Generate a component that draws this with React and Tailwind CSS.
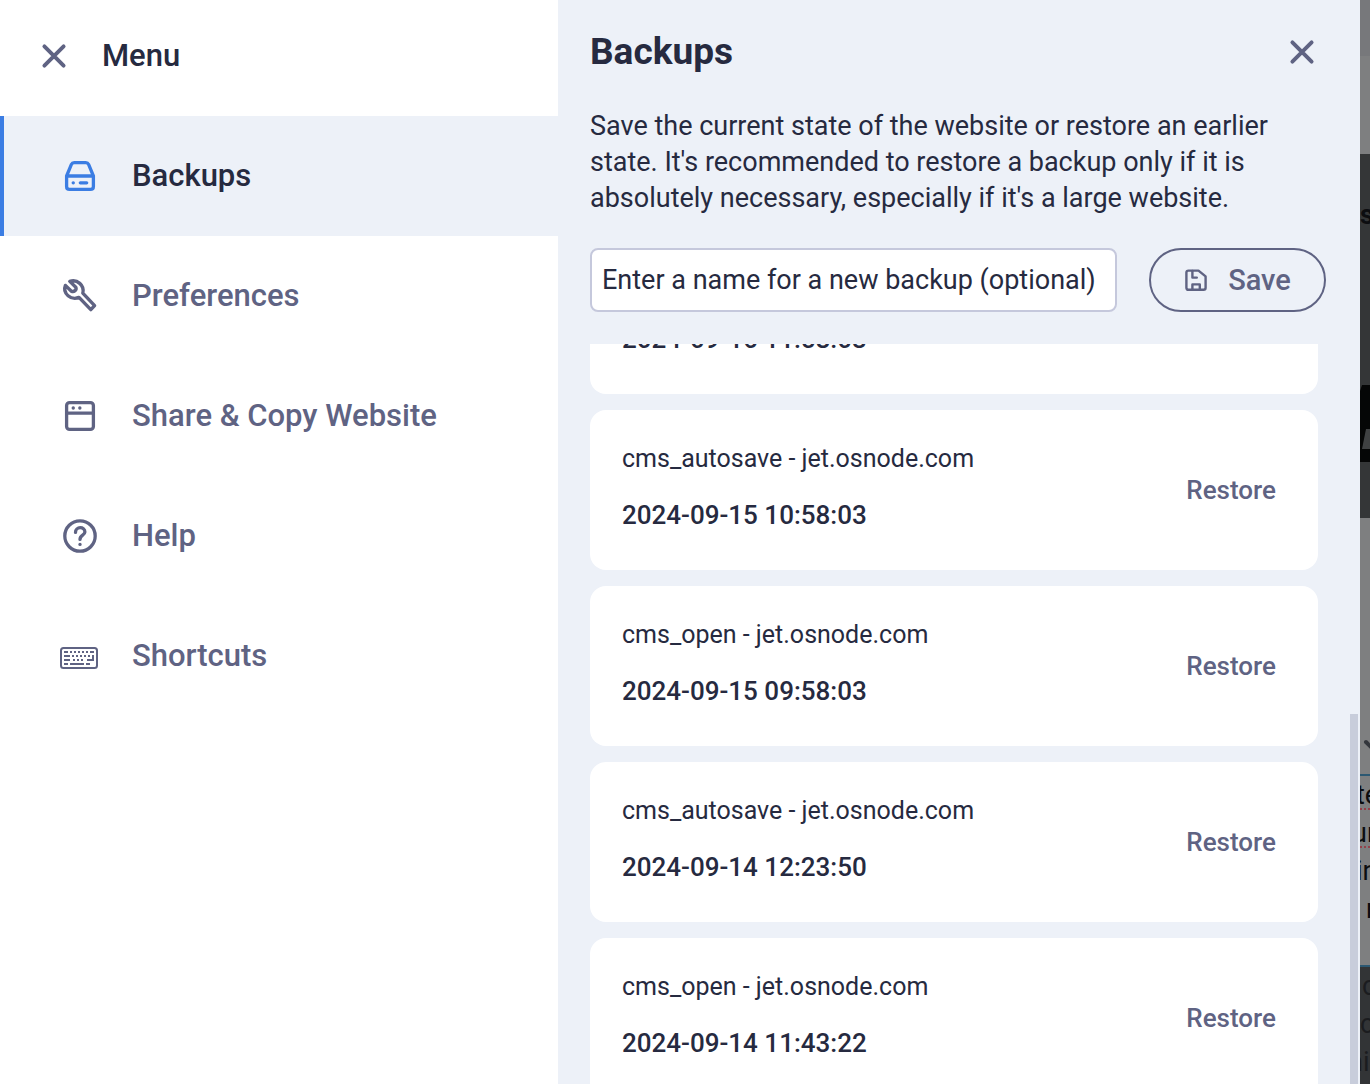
import React, { useLayoutEffect, useRef } from "react";

const backups = [
  { name: "cms_autosave - jet.osnode.com", date: "2024-09-16 11:58:03" },
  { name: "cms_autosave - jet.osnode.com", date: "2024-09-15 10:58:03" },
  { name: "cms_open - jet.osnode.com", date: "2024-09-15 09:58:03" },
  { name: "cms_autosave - jet.osnode.com", date: "2024-09-14 12:23:50" },
  { name: "cms_open - jet.osnode.com", date: "2024-09-14 11:43:22" },
];

const stroke = {
  fill: "none",
  stroke: "currentColor",
  strokeLinecap: "round",
  strokeLinejoin: "round",
};

function CloseIcon() {
  return (
    <svg width="40" height="40" viewBox="0 0 40 40" {...stroke} strokeWidth="3.9" aria-hidden="true">
      <path d="M10.4 10.4 29.6 29.6M29.6 10.4 10.4 29.6" />
    </svg>
  );
}

function DriveIcon() {
  return (
    <svg width="40" height="40" viewBox="0 0 40 40" {...stroke} strokeWidth="3.3" aria-hidden="true">
      <path d="M6.6 20 11.4 8.4Q12.2 6.6 14.2 6.6H25.8Q27.8 6.6 28.6 8.4L33.4 20V30.4Q33.4 33.4 30.4 33.4H9.6Q6.6 33.4 6.6 30.4ZM7 20H33" />
      <path d="M13.2 26.8H13.3M20.3 26.8H26.7" />
    </svg>
  );
}

function WrenchIcon() {
  return (
    <svg width="40" height="40" viewBox="0 0 40 40" {...stroke} strokeWidth="3.4" aria-hidden="true">
      <path d="M5.4 9.4 11.4 15.2C14 16.4 17 13.8 15.8 11.2L9.8 5.4C17 2.7 24.8 9.4 22.8 17.2L34.6 29.6 30.8 33.6 19 21.4C11.2 24.8 2.2 17.4 5.4 9.4Z" />
    </svg>
  );
}

function BrowserIcon() {
  return (
    <svg width="40" height="40" viewBox="0 0 40 40" {...stroke} strokeWidth="3.3" aria-hidden="true">
      <rect x="6.6" y="6.6" width="26.8" height="26.8" rx="3" />
      <path d="M7 17.2H33" />
      <path d="M13.2 12H13.3M19.8 12H19.9" />
    </svg>
  );
}

function HelpIcon() {
  return (
    <svg width="40" height="40" viewBox="0 0 40 40" {...stroke} strokeWidth="3.3" aria-hidden="true">
      <circle cx="20" cy="20" r="15.2" />
      <path d="M15.5 16.4C15.5 10.2 24.9 10.2 24.9 16C24.9 19.5 20 19 20 23.4" />
      <path d="M20 28.3V28.4" />
    </svg>
  );
}

function KeyboardIcon() {
  return (
    <svg width="40" height="40" viewBox="0 0 40 40" fill="none" stroke="currentColor" strokeWidth="2" aria-hidden="true">
      <rect x="1" y="12" width="36" height="20" rx="2.5" />
      <path d="M4 16H8M10 16H12M14 16H16M18 16H20M22 16H24M26 16H28M30 16H34" />
      <path d="M4 20H10M12 20H14M16 20H18M20 20H22M24 20H26M28 20H30M4 24H10M13 24H15M17 24H19M21 24H23M27 24H33V19M4 28H8M10 28H24M26 28H30" />
    </svg>
  );
}

function SaveIcon() {
  return (
    <svg width="24" height="24" viewBox="0 0 24 24" {...stroke} strokeWidth="2.4" aria-hidden="true">
      <path d="M4.4 2.6H14.5L21.6 8.4V19.8Q21.6 21.8 19.6 21.8H4.4Q2.4 21.8 2.4 19.8V4.6Q2.4 2.6 4.4 2.6Z" />
      <path d="M8.4 3V9.6H12.8M8.4 21V16.4H15.8V21" />
    </svg>
  );
}

const navItems = [
  { label: "Backups", Icon: DriveIcon, active: true },
  { label: "Preferences", Icon: WrenchIcon },
  { label: "Share & Copy Website", Icon: BrowserIcon },
  { label: "Help", Icon: HelpIcon },
  { label: "Shortcuts", Icon: KeyboardIcon },
];

function Sidebar() {
  return (
    <nav className="bg-white" aria-label="Menu">
      <div className="flex h-[116px] items-start gap-7 px-[34px] pt-9">
        <button type="button" aria-label="Close menu" className="text-[#5f6383]">
          <CloseIcon />
        </button>
        <h2 className="text-[31px] leading-10 font-medium">Menu</h2>
      </div>
      <ul>
        {navItems.map(({ label, Icon, active }) => (
          <li key={label}>
            <a
              href="#"
              aria-current={active ? "page" : undefined}
              className={
                active
                  ? "flex h-[120px] items-center gap-8 border-l-4 border-[#3b7de3] bg-[#edf1f8] pl-14"
                  : "flex h-[120px] items-center gap-8 border-l-4 border-transparent pl-14 text-[#5f6383]"
              }
            >
              <span className={active ? "text-[#3b7de3]" : ""}>
                <Icon />
              </span>
              <span className="text-[31px] leading-10 font-medium">{label}</span>
            </a>
          </li>
        ))}
      </ul>
    </nav>
  );
}

function BackupList() {
  const ref = useRef(null);
  useLayoutEffect(() => {
    ref.current.scrollTop = 110;
  }, []);
  return (
    <div className="relative mt-8 min-h-0 flex-1">
      <ul ref={ref} className="flex h-full flex-col gap-4 overflow-hidden pr-[42px] pl-8">
        {backups.map(({ name, date }) => (
          <li key={date} className="flex h-40 shrink-0 items-center justify-between rounded-2xl bg-white pr-[42px] pl-8">
            <div className="flex flex-col gap-6 pb-1.5">
              <p className="text-[25px] leading-8">{name}</p>
              <p className="text-[26px] leading-8 font-medium">{date}</p>
            </div>
            <button type="button" className="text-[26px] leading-8 font-medium text-[#5f6383]">
              Restore
            </button>
          </li>
        ))}
      </ul>
      <div className="absolute top-1/2 right-0.5 bottom-0 w-2 bg-[#c8cddb]" />
    </div>
  );
}

function BackupsPanel() {
  return (
    <main className="flex min-h-0 flex-col bg-[#edf1f8]">
      <header className="flex items-center justify-between pt-8 pr-[38px] pl-8">
        <h1 className="text-[37px] leading-10 font-bold">Backups</h1>
        <button type="button" aria-label="Close backups" className="text-[#5f6383]">
          <CloseIcon />
        </button>
      </header>
      <p className="mt-9 pr-20 pl-8 text-[27px] leading-9">
        Save the current state of the website or restore an earlier state. It's recommended to restore a backup only if
        it is absolutely necessary, especially if it's a large website.
      </p>
      <form className="mt-8 flex gap-8 pr-[34px] pl-8">
        <input
          type="text"
          aria-label="Backup name"
          placeholder="Enter a name for a new backup (optional)"
          className="h-16 min-w-0 flex-1 rounded-lg border-2 border-[#c5c8dc] bg-white px-2.5 text-[27px] placeholder:text-[#262a40]"
        />
        <button
          type="button"
          className="flex h-16 w-[177px] items-center justify-center gap-5 rounded-full border-2 border-[#5f6383] text-[29px] leading-8 font-medium text-[#5f6383]"
        >
          <SaveIcon />
          Save
        </button>
      </form>
      <BackupList />
    </main>
  );
}

/* Sliver of the dimmed page that stays visible beside the drawer. */
function DimmedPage() {
  return (
    <aside aria-hidden="true" className="flex min-w-0 flex-col overflow-hidden bg-[#7e7f80] text-[27px] leading-[38px] text-[#0c0d10]">
      <div className="h-14 shrink-0 bg-[#77787b]" />
      <div className="h-[98px] shrink-0" />
      <div className="h-[231px] shrink-0 bg-[#343637] pt-[42px] font-bold">s</div>
      <div className="h-[77px] shrink-0 bg-[#050606]">
        <svg width="10" height="77" viewBox="0 0 10 77">
          <path d="M0 0H2L0 6Z" fill="#343637" />
          <path d="M6 44H10V64H2Z" fill="#3f4142" />
        </svg>
      </div>
      <div className="h-14 shrink-0 bg-[#343637]" />
      <div className="h-[256px] shrink-0 pt-[220px]">
        <svg width="10" height="16" viewBox="0 0 10 16" {...stroke} strokeWidth="4" className="text-[#33363c]">
          <path d="M6 4 13 11" />
        </svg>
      </div>
      <div className="h-[193px] shrink-0 border-y-2 border-[#2c5872]">
        <p className="-ml-1 underline decoration-[#94404a] decoration-dotted decoration-2 underline-offset-4">te</p>
        <p className="-ml-2 underline decoration-[#94404a] decoration-dotted decoration-2 underline-offset-4">ur</p>
        <p className="-ml-1">in</p>
        <p className="pl-1.5">r</p>
      </div>
      <div className="flex-1 bg-[#323436] text-[#1b1c1f]">
        <p className="pl-0.5">c</p>
        <p>c</p>
        <p className="-ml-3">ni</p>
      </div>
    </aside>
  );
}

export default function App() {
  return (
    <div className="grid h-screen grid-cols-[558fr_802fr_10px] grid-rows-1 overflow-hidden font-['Roboto',sans-serif] text-[#262a40]">
      <Sidebar />
      <BackupsPanel />
      <DimmedPage />
    </div>
  );
}
